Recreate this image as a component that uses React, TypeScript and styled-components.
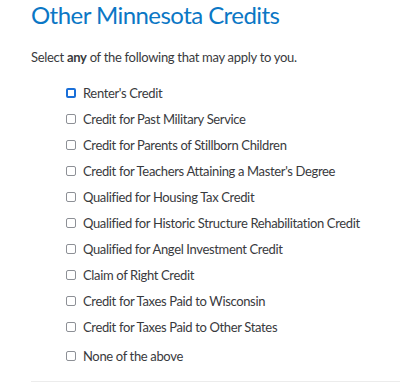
import React from "react";
import styled, { createGlobalStyle } from "styled-components";

const Global = createGlobalStyle`
  html, body { margin: 0; padding: 0; background: #fff; }
  body { font-family: Lato, "Open Sans", sans-serif; }
`;

const Page = styled.div`
  width: 400px;
  height: 386px;
  overflow: hidden;
  padding: 0 0 0 31px;
  box-sizing: border-box;
`;

const Title = styled.h1`
  margin: 0;
  font-size: 24px;
  line-height: 30px;
  font-weight: 400;
  letter-spacing: -0.55px;
  color: #0b77c5;
`;

const Lead = styled.p`
  margin: 18px 0 0;
  font-size: 13px;
  line-height: 18px;
  letter-spacing: -0.3px;
  color: #393a3d;
  b { font-weight: 700; }
`;

const List = styled.ul`
  list-style: none;
  margin: 14px 0 0;
  padding: 0 0 0 35px;
  display: flex;
  flex-direction: column;
`;

const Item = styled.li<{ $last?: boolean }>`
  display: flex;
  align-items: center;
  gap: 7px;
  height: 26px;
  margin-top: ${(p) => (p.$last ? "3px" : "0")};
  font-size: 13px;
  letter-spacing: -0.35px;
  color: #393a3d;
`;

const Box = styled.span<{ $focus?: boolean }>`
  width: 10px;
  height: 10px;
  box-sizing: border-box;
  border-radius: 2px;
  border: ${(p) => (p.$focus ? "2.5px solid #1a6fd8" : "1px solid #8d9096")};
  flex: none;
`;

const Rule = styled.hr`
  margin: 12px 0 0;
  border: 0;
  border-top: 1px solid #ececec;
`;

const items = [
  "Renter's Credit",
  "Credit for Past Military Service",
  "Credit for Parents of Stillborn Children",
  "Credit for Teachers Attaining a Master's Degree",
  "Qualified for Housing Tax Credit",
  "Qualified for Historic Structure Rehabilitation Credit",
  "Qualified for Angel Investment Credit",
  "Claim of Right Credit",
  "Credit for Taxes Paid to Wisconsin",
  "Credit for Taxes Paid to Other States",
  "None of the above",
];

export default function App() {
  return (
    <Page>
      <Global />
      <Title>Other Minnesota Credits</Title>
      <Lead>
        Select <b>any</b> of the following that may apply to you.
      </Lead>
      <List>
        {items.map((t, i) => (
          <Item key={t} $last={i === items.length - 1}>
            <Box $focus={i === 0} />
            {t}
          </Item>
        ))}
      </List>
      <Rule />
    </Page>
  );
}
